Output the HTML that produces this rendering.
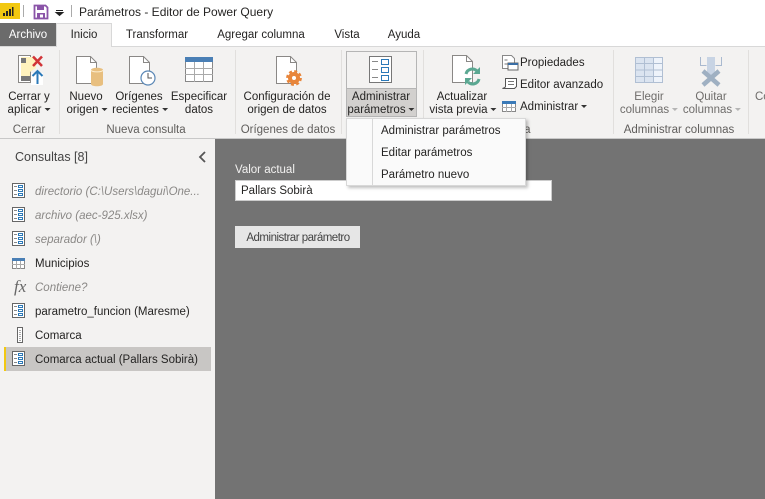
<!DOCTYPE html>
<html><head><meta charset="utf-8"><style>
html,body{margin:0;padding:0;width:765px;height:499px;overflow:hidden;background:#fff}
body{position:relative;font-family:"Liberation Sans",sans-serif;font-size:11.5px;color:#252423}
.a{position:absolute}
.t{position:absolute;white-space:nowrap;line-height:14px}
.c{position:absolute;white-space:nowrap;line-height:14px;transform:translateX(-50%)}
.g{color:#605e5c}.d{color:#6f6d6b}.i{font-style:italic;color:#8a8886}
svg{position:absolute;overflow:visible}
.ar{display:inline-block;width:0;height:0;border-left:3px solid transparent;border-right:3px solid transparent;border-top:3px solid #333;margin-left:3px;vertical-align:2px}
.ar.l{border-top-color:#b5b5b5}
</style></head><body>
<!-- title bar -->
<div class="a" style="left:0;top:3px;width:20px;height:16px;background:#f2c811"></div>
<svg style="left:0;top:0" width="80" height="24"><path d="M3 16h2v-3H3zM6 16h2v-5H6zM9 16h2V9H9zM12 16h1.500V7H12z" fill="#252423"/><path d="M23.500 5v12M71.500 5v12" stroke="#aaa"/><path d="M34.500 5.500h11l2 2v11h-13z" fill="#fff" stroke="#8a54a8" stroke-width="1.800"/><path d="M37 6h7v4h-7z" fill="#8a54a8"/><path d="M37 13h8v5h-8z" fill="#8a54a8"/><path d="M40 14.500h3v3h-3z" fill="#fff"/><path d="M56 10.500h7M56 12.500l3.500 3 3.500-3z" stroke="#222" fill="#222"/></svg>
<div class="t" style="left:79px;top:5px;font-size:12px;line-height:14px">Parámetros - Editor de Power Query</div>
<!-- tabs -->
<div class="a" style="left:0;top:23px;width:56px;height:23px;background:#6b6b6b"></div>
<div class="c" style="left:28px;top:28px;color:#fff">Archivo</div>
<div class="a" style="left:56px;top:23px;width:56px;height:24px;background:#f3f2f1;border:1px solid #d8d8d8;border-bottom:0;box-sizing:border-box"></div>
<div class="c" style="left:84px;top:28px">Inicio</div>
<div class="c" style="left:157px;top:28px">Transformar</div>
<div class="c" style="left:261px;top:28px">Agregar columna</div>
<div class="c" style="left:347px;top:28px">Vista</div>
<div class="c" style="left:404px;top:28px">Ayuda</div>
<!-- ribbon -->
<div class="a" style="left:0;top:46px;width:765px;height:93px;background:#f3f2f1;border-top:1px solid #d8d8d8;border-bottom:1px solid #c8c8c8;box-sizing:border-box"></div>
<div class="a" style="left:57px;top:46px;width:54px;height:1px;background:#f3f2f1"></div>
<svg style="left:0;top:0" width="765" height="140"><path d="M59.500 50v84M235.500 50v84M341.500 50v84M423.500 50v84M613.500 50v84M748.500 50v84" stroke="#e1dfdd"/></svg>
<!-- Cerrar icon -->
<svg style="left:18px;top:55px" width="28" height="30"><path d="M.500.500h12v27H.500z" fill="#fff" stroke="#8a8886"/><path d="M3 2h15v11l-6 4v9H3z" fill="#fff2bd"/><path d="M3 3h5v5H3zM3 21h9v5H3z" fill="#777"/><path d="M15 1.500l9 9.500M24 1.500L15 11" stroke="#d13438" stroke-width="2.500"/><path d="M13 18h12v12H13z" fill="#fff"/><path d="M19.500 29V16M14.500 21l5-5 5 5" fill="none" stroke="#2b79b8" stroke-width="2"/></svg>
<div class="c" style="left:29px;top:90px">Cerrar y</div>
<div class="c" style="left:29px;top:103px">aplicar<i class="ar"></i></div>
<div class="c g" style="left:29px;top:123px">Cerrar</div>
<!-- Nuevo origen -->
<svg style="left:76px;top:56px" width="28" height="31"><path d="M.500.500h14l6 6v21H.500z" fill="#fff" stroke="#8a8886"/><path d="M14.500.500v6h6" fill="none" stroke="#8a8886"/><path d="M15 14c0-3 12-3 12 0v14c0 3-12 3-12 0z" fill="#e8bf7f"/><path d="M15 14c0 2.500 12 2.500 12 0" fill="none" stroke="#fbeccd"/></svg>
<div class="c" style="left:86px;top:90px">Nuevo</div>
<div class="c" style="left:87px;top:103px">origen<i class="ar"></i></div>
<svg style="left:129px;top:56px" width="28" height="31"><path d="M.500.500h14l6 6v21H.500z" fill="#fff" stroke="#8a8886"/><path d="M14.500.500v6h6" fill="none" stroke="#8a8886"/><circle cx="19" cy="22" r="7" fill="#fff" stroke="#5a87b5" stroke-width="1.200"/><path d="M19 17v5h4" fill="none" stroke="#555"/></svg>
<div class="c" style="left:139px;top:90px">Orígenes</div>
<div class="c" style="left:140px;top:103px">recientes<i class="ar"></i></div>
<svg style="left:185px;top:57px" width="28" height="25"><path d="M.500.500h27v24H.500z" fill="#fff" stroke="#888"/><path d="M0 0h28v5H0z" fill="#4a7fb5"/><path d="M0 11.500h28M0 17.500h28M9.500 5v20M18.500 5v20" stroke="#aaa"/></svg>
<div class="c" style="left:199px;top:90px">Especificar</div>
<div class="c" style="left:199px;top:103px">datos</div>
<div class="c g" style="left:146px;top:123px">Nueva consulta</div>
<!-- Config -->
<svg style="left:276px;top:56px" width="32" height="30"><path d="M.500.500h14l6 6v21H.500z" fill="#fff" stroke="#8a8886"/><path d="M14.500.500v6h6" fill="none" stroke="#8a8886"/><circle cx="18" cy="22" r="4" fill="none" stroke="#e8853a" stroke-width="4"/><circle cx="18" cy="22" r="6.800" fill="none" stroke="#e8853a" stroke-width="2.200" stroke-dasharray="3 2.340"/></svg>
<div class="c" style="left:287px;top:90px">Configuración de</div>
<div class="c" style="left:287px;top:103px">origen de datos</div>
<div class="c g" style="left:288px;top:123px">Orígenes de datos</div>
<!-- Administrar parametros -->
<div class="a" style="left:346px;top:51px;width:71px;height:66px;border:1px solid #b5b5b5;box-sizing:border-box"></div>
<div class="a" style="left:347px;top:88px;width:69px;height:28px;background:#d2d0ce"></div>
<div class="a" style="left:346px;top:88px;width:71px;height:1px;background:#b5b5b5"></div>
<svg style="left:369px;top:56px" width="24" height="28"><path d="M.500.500h22v26H.500z" fill="#fff" stroke="#777"/><path d="M3 5.500h6M3 13.500h6M3 21.500h6" stroke="#888"/><path d="M12.500 3.500h7v5h-7zM12.500 11.500h7v5h-7zM12.500 19.500h7v5h-7z" fill="none" stroke="#2b79b8"/></svg>
<div class="c" style="left:381px;top:90px">Administrar</div>
<div class="c" style="left:381px;top:103px">parámetros<i class="ar"></i></div>
<!-- Actualizar -->
<svg style="left:452px;top:55px" width="32" height="31"><path d="M.500.500h14l6 6v21H.500z" fill="#fff" stroke="#8a8886"/><path d="M14.500.500v6h6" fill="none" stroke="#8a8886"/><path d="M14 19a6.500 6.500 0 0 1 11-3M27 24a6.500 6.500 0 0 1-11 3" fill="none" stroke="#5ba892" stroke-width="3"/><path d="M28 12v7h-7zM13 30v-7h7z" fill="#5ba892"/></svg>
<div class="c" style="left:462px;top:90px">Actualizar</div>
<div class="c" style="left:463px;top:103px">vista previa<i class="ar"></i></div>
<svg style="left:501px;top:54px" width="18" height="60"><path d="M1.500 1.500h9l3 3v10h-12z" fill="#fff" stroke="#888"/><path d="M3.500 6h3M3.500 10h3" stroke="#777"/><path d="M7 9h10v7H7z" fill="#fff" stroke="#666"/><path d="M7 9h10v2H7z" fill="#3a6ea5"/><path d="M4.500 24.500h11v8l-2 2h-12c2-1 3-1 3-2z" fill="#fff" stroke="#555"/><path d="M7 27.500h6M7 30.500h6" stroke="#777"/><path d="M1.500 47.500h13v10h-13z" fill="#fff" stroke="#888"/><path d="M1 47h14v3H1z" fill="#3a7ab8"/><path d="M1 53.500h14M5.500 50v8M10.500 50v8" stroke="#aaa"/></svg>
<div class="t" style="left:520px;top:56px">Propiedades</div>
<div class="t" style="left:520px;top:78px">Editor avanzado</div>
<div class="t" style="left:520px;top:100px">Administrar<i class="ar"></i></div>
<div class="t g" style="left:512px;top:123px">ulta</div>
<!-- Elegir -->
<svg style="left:635px;top:57px" width="29" height="26"><path d="M.500.500h27v25H.500z" fill="#dbe4f0" stroke="#b0bfd3"/><path d="M19 1h8v24h-8z" fill="#eef3fa"/><path d="M0 6.500h28M0 13h28M0 19.500h28M9.500 0v26M18.500 0v26" stroke="#b0bfd3"/></svg>
<div class="c d" style="left:649px;top:90px">Elegir</div>
<div class="c d" style="left:649px;top:103px">columnas<i class="ar l"></i></div>
<svg style="left:700px;top:57px" width="23" height="30"><path d="M.500 0v8.500h6M21.500 0v8.500h-6" fill="none" stroke="#a9b9cf"/><path d="M7 0h8v17l-4 4-4-4z" fill="#c8d4e4"/><path d="M3 14l16 14M19 14L3 28" stroke="#9fb0c2" stroke-width="4.500"/></svg>
<div class="c d" style="left:711px;top:90px">Quitar</div>
<div class="c d" style="left:712px;top:103px">columnas<i class="ar l"></i></div>
<div class="c g" style="left:679px;top:123px">Administrar columnas</div>
<div class="t d" style="left:755px;top:90px">Co</div>
<!-- left panel -->
<div class="a" style="left:0;top:139px;width:215px;height:360px;background:#f3f2f1"></div>
<div class="a" style="left:215px;top:139px;width:550px;height:360px;background:#737373"></div>
<div class="t" style="left:15px;top:150px;font-size:12.500px;color:#444">Consultas [8]</div>
<svg style="left:198px;top:151px" width="9" height="12"><path d="M7 1L2 6l5 5" fill="none" stroke="#555" stroke-width="1.800"/></svg>
<div class="a" style="left:4px;top:347px;width:207px;height:24px;background:#c8c6c4"></div>
<div class="a" style="left:4px;top:347px;width:2px;height:24px;background:#f2c811"></div>
<svg style="left:0;top:180px" width="30" height="192">
<g><path d="M12.500 3.500h12v14h-12z" fill="#fff" stroke="#666"/><path d="M14 6.500h3M14 10.500h3M14 14.500h3" stroke="#888"/><path d="M18.500 5.500h4v2h-4zM18.500 9.500h4v2h-4zM18.500 13.500h4v2h-4z" fill="none" stroke="#2b79b8"/></g>
<g transform="translate(0,24)"><path d="M12.500 3.500h12v14h-12z" fill="#fff" stroke="#666"/><path d="M14 6.500h3M14 10.500h3M14 14.500h3" stroke="#888"/><path d="M18.500 5.500h4v2h-4zM18.500 9.500h4v2h-4zM18.500 13.500h4v2h-4z" fill="none" stroke="#2b79b8"/></g>
<g transform="translate(0,48)"><path d="M12.500 3.500h12v14h-12z" fill="#fff" stroke="#666"/><path d="M14 6.500h3M14 10.500h3M14 14.500h3" stroke="#888"/><path d="M18.500 5.500h4v2h-4zM18.500 9.500h4v2h-4zM18.500 13.500h4v2h-4z" fill="none" stroke="#2b79b8"/></g>
<g transform="translate(0,72)"><path d="M12.500 6.500h12v10h-12z" fill="#fff" stroke="#888"/><path d="M12 6h13v3H12z" fill="#4a7fb5"/><path d="M12 12.500h13M16.500 9v8M20.500 9v8" stroke="#aaa"/></g>
<g transform="translate(0,120)"><path d="M12.500 3.500h12v14h-12z" fill="#fff" stroke="#666"/><path d="M14 6.500h3M14 10.500h3M14 14.500h3" stroke="#888"/><path d="M18.500 5.500h4v2h-4zM18.500 9.500h4v2h-4zM18.500 13.500h4v2h-4z" fill="none" stroke="#2b79b8"/></g>
<g transform="translate(0,144)"><path d="M17.500 3.500h5v15h-5z" fill="#fff" stroke="#666"/><path d="M19 6.500h2M19 8.500h2M19 10.500h2M19 12.500h2M19 14.500h2M19 16.500h2" stroke="#aaa"/></g>
<g transform="translate(0,168)"><path d="M12.500 3.500h12v14h-12z" fill="#fff" stroke="#666"/><path d="M14 6.500h3M14 10.500h3M14 14.500h3" stroke="#888"/><path d="M18.500 5.500h4v2h-4zM18.500 9.500h4v2h-4zM18.500 13.500h4v2h-4z" fill="none" stroke="#2b79b8"/></g>
</svg>
<div class="t" style="left:14px;top:280px;font:italic 17px/14px 'Liberation Serif',serif;color:#666">fx</div>
<div class="t i" style="left:35px;top:185px">directorio (C:\Users\dagui\One...</div>
<div class="t i" style="left:35px;top:209px">archivo (aec-925.xlsx)</div>
<div class="t i" style="left:35px;top:233px">separador (\)</div>
<div class="t" style="left:35px;top:257px">Municipios</div>
<div class="t i" style="left:35px;top:281px">Contiene?</div>
<div class="t" style="left:35px;top:305px">parametro_funcion (Maresme)</div>
<div class="t" style="left:35px;top:329px">Comarca</div>
<div class="t" style="left:35px;top:353px">Comarca actual (Pallars Sobirà)</div>
<!-- content -->
<div class="t" style="left:235px;top:163px;color:#f3f2f1">Valor actual</div>
<div class="a" style="left:235px;top:180px;width:317px;height:21px;background:#fff;border:1px solid #ccc;box-sizing:border-box"></div>
<div class="t" style="left:241px;top:184px">Pallars Sobirà</div>
<div class="a" style="left:235px;top:226px;width:125px;height:22px;background:#e6e6e6"></div>
<div class="c" style="left:298px;top:231px;color:#444;letter-spacing:-.5px">Administrar parámetro</div>
<!-- dropdown -->
<div class="a" style="left:346px;top:118px;width:180px;height:68px;background:#fafafa;border:1px solid #d8d8d8;box-sizing:border-box;box-shadow:2px 2px 3px rgba(0,0,0,.25)"></div>
<div class="a" style="left:372px;top:119px;width:1px;height:66px;background:#d8d8d8"></div>
<div class="t" style="left:381px;top:124px">Administrar parámetros</div>
<div class="t" style="left:381px;top:146px">Editar parámetros</div>
<div class="t" style="left:381px;top:168px">Parámetro nuevo</div>
</body></html>
